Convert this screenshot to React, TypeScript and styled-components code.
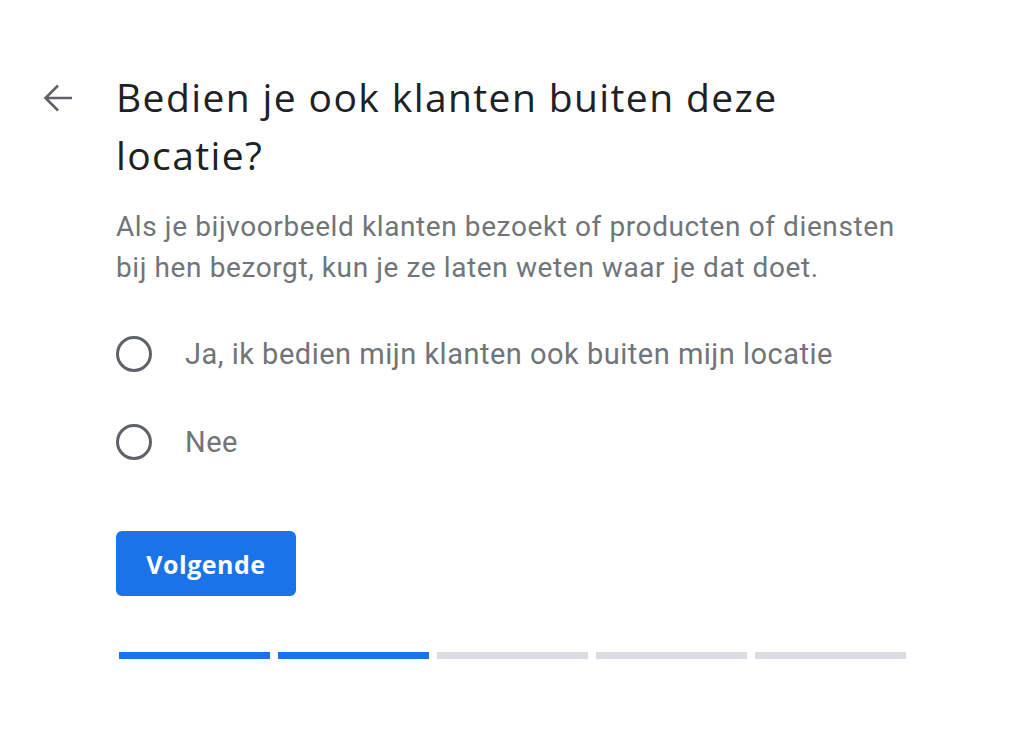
import React, { useState } from "react";
import styled, { createGlobalStyle } from "styled-components";

const Global = createGlobalStyle`
  html, body { margin: 0; padding: 0; background: #ffffff; }
  body { font-family: Roboto, "Noto Sans", Arial, sans-serif; }
  * { box-sizing: border-box; }
`;

const Page = styled.div`
  display: flex;
  align-items: flex-start;
  padding: 68px 0 0 36px;
  min-height: 742px;
`;

const BackButton = styled.button`
  width: 44px;
  height: 44px;
  margin-top: 8px;
  margin-right: 36px;
  padding: 0;
  border: none;
  background: transparent;
  display: flex;
  align-items: center;
  justify-content: center;
  color: #5f6368;
  cursor: pointer;
`;

const Content = styled.div`
  width: 790px;
  display: flex;
  flex-direction: column;
`;

const Title = styled.h1`
  margin: 0;
  font-family: "Open Sans", Roboto, sans-serif;
  font-weight: 400;
  font-size: 39px;
  letter-spacing: 1.4px;
  line-height: 58px;
  color: #202124;
`;

const Description = styled.p`
  margin: 22px 0 0;
  font-family: Roboto, sans-serif;
  font-size: 28px;
  letter-spacing: 0.6px;
  line-height: 41px;
  color: #70757a;
`;

const Options = styled.div`
  margin-top: 48px;
  display: flex;
  flex-direction: column;
  gap: 52px;
`;

const OptionRow = styled.label`
  display: flex;
  align-items: center;
  gap: 33px;
  cursor: pointer;
`;

const RadioCircle = styled.span<{ $checked: boolean }>`
  width: 36px;
  height: 36px;
  border-radius: 50%;
  border: 3px solid ${(p) => (p.$checked ? "#1a73e8" : "#5f6368")};
  display: flex;
  align-items: center;
  justify-content: center;
  flex: none;
  &::after {
    content: "";
    width: 16px;
    height: 16px;
    border-radius: 50%;
    background: #1a73e8;
    display: ${(p) => (p.$checked ? "block" : "none")};
  }
`;

const OptionLabel = styled.span`
  font-family: Roboto, sans-serif;
  font-size: 29px;
  letter-spacing: 0.5px;
  line-height: 36px;
  color: #70757a;
`;

const NextButton = styled.button`
  margin-top: 71px;
  align-self: flex-start;
  width: 180px;
  height: 65px;
  padding: 0;
  border: none;
  border-radius: 6px;
  background: #1a73e8;
  color: #ffffff;
  font-family: "Open Sans", Roboto, sans-serif;
  font-weight: 700;
  font-size: 25px;
  letter-spacing: 0.5px;
  cursor: pointer;
`;

const Progress = styled.div`
  margin-top: 56px;
  display: grid;
  grid-template-columns: repeat(5, 1fr);
  gap: 8px;
  padding-left: 3px;
`;

const Segment = styled.div<{ $done: boolean }>`
  height: 7px;
  background: ${(p) => (p.$done ? "#1a73e8" : "#dadce0")};
`;

const options = [
  "Ja, ik bedien mijn klanten ook buiten mijn locatie",
  "Nee",
];

export default function App() {
  const [selected, setSelected] = useState<number | null>(null);
  return (
    <>
      <Global />
      <Page>
        <BackButton aria-label="Terug">
          <svg width="30" height="30" viewBox="0 0 30 30" fill="none">
            <path
              d="M29 15H3M15 2.5L2.5 15L15 27.5"
              stroke="currentColor"
              strokeWidth="2.6"
            />
          </svg>
        </BackButton>
        <Content>
          <Title>Bedien je ook klanten buiten deze locatie?</Title>
          <Description>
            Als je bijvoorbeeld klanten bezoekt of producten of diensten bij hen
            bezorgt, kun je ze laten weten waar je dat doet.
          </Description>
          <Options>
            {options.map((o, i) => (
              <OptionRow key={o} onClick={() => setSelected(i)}>
                <RadioCircle $checked={selected === i} />
                <OptionLabel>{o}</OptionLabel>
              </OptionRow>
            ))}
          </Options>
          <NextButton>Volgende</NextButton>
          <Progress>
            {[0, 1, 2, 3, 4].map((i) => (
              <Segment key={i} $done={i < 2} />
            ))}
          </Progress>
        </Content>
      </Page>
    </>
  );
}
